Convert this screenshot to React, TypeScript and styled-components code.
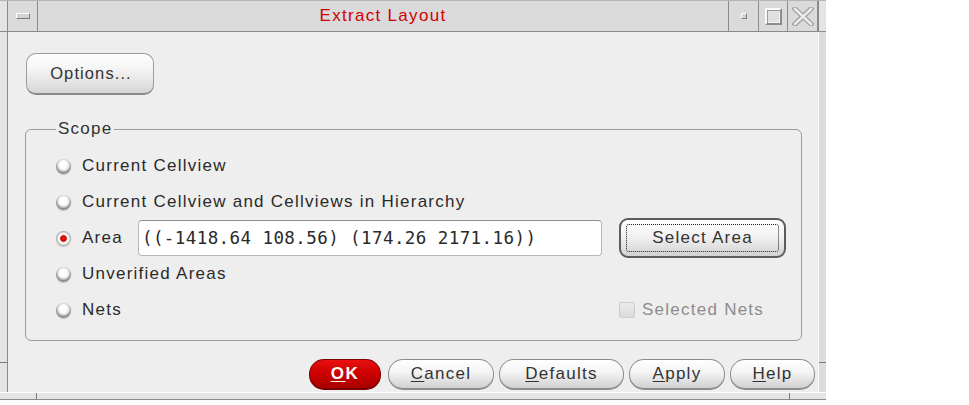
import React from 'react';
import styled, { createGlobalStyle } from 'styled-components';

const Global = createGlobalStyle`
  html, body { margin: 0; padding: 0; background: #ffffff; }
  body { font-family: "Liberation Sans", Arial, sans-serif; }
  * { box-sizing: border-box; }
`;

const Window = styled.div`
  width: 826px;
  height: 400px;
  display: flex;
  flex-direction: column;
  background: #e2e2e2;
`;

const TitleBar = styled.div`
  height: 32px;
  display: flex;
  background: #dadada;
  border-top: 1px solid #b4b4b4;
  border-bottom: 1px solid #8a8a8a;
`;

const FrameEdge = styled.div<{ $side: 'left' | 'right' }>`
  width: 8px;
  background: #e4e4e4;
  ${(p) => (p.$side === 'left' ? 'border-right: 1px solid #8a8a8a;' : 'border-left: 1px solid #8a8a8a;')}
`;

const TitleCell = styled.div<{ $w: number }>`
  width: ${(p) => p.$w}px;
  display: flex;
  align-items: center;
  justify-content: center;
  border-right: 1px solid #8a8a8a;
  &:last-of-type { border-right: none; }
`;

const RaisedBar = styled.span<{ $w: number; $h: number }>`
  display: block;
  width: ${(p) => p.$w}px;
  height: ${(p) => p.$h}px;
  background: #d2d2d2;
  border: 1px solid;
  border-color: #ffffff #7c7c7c #7c7c7c #ffffff;
`;

const MaxBox = styled.span`
  display: block;
  width: 17px;
  height: 17px;
  border: 2px solid;
  border-color: #fafafa #8c8c8c #8c8c8c #fafafa;
  box-shadow: inset 1px 1px 0 #9a9a9a, inset -1px -1px 0 #f4f4f4;
  background: #e0e0e0;
`;

const TitleText = styled.div`
  flex: 1;
  display: flex;
  align-items: center;
  justify-content: center;
  border-right: 1px solid #8a8a8a;
  color: #d20000;
  font-size: 17px;
  letter-spacing: 1.3px;
`;

const Middle = styled.div`
  flex: 1;
  display: flex;
  min-height: 0;
`;

const SideEdge = styled.div<{ $side: 'left' | 'right' }>`
  width: 8px;
  display: flex;
  flex-direction: column;
  background: ${(p) => (p.$side === 'left' ? '#e4e4e4' : '#dcdcdc')};
  ${(p) => (p.$side === 'left' ? 'border-right: 1px solid #8a8a8a;' : 'border-left: 1px solid #fbfbfb;')}
`;

const EdgeFill = styled.div`
  flex: 1;
`;

const EdgeCorner = styled.div`
  height: 30px;
  border-top: 1px solid #7a7a7a;
`;

const BottomEdge = styled.div`
  height: 8px;
  display: flex;
  background: #e4e4e4;
  border-top: 1px solid #fcfcfc;
  border-bottom: 1px solid #8a8a8a;
`;

const BottomCorner = styled.div<{ $side: 'left' | 'right' }>`
  width: 37px;
  ${(p) => (p.$side === 'left' ? 'border-right: 1px solid #7a7a7a;' : 'border-left: 1px solid #7a7a7a;')}
`;

const Content = styled.div`
  flex: 1;
  display: flex;
  flex-direction: column;
  padding: 21px 0 0 17px;
  background: #eeeeee;
  color: #2a2a2a;
  font-size: 17px;
  letter-spacing: 1.25px;
`;

const OptionsButton = styled.button`
  align-self: flex-start;
  margin-left: 1px;
  width: 128px;
  height: 42px;
  border-radius: 10px;
  border: 1px solid #9c9c9c;
  border-bottom: 2px solid #8a8a8a;
  background: linear-gradient(#ffffff, #f4f4f4 40%, #d6d6d6);
  font: inherit;
  letter-spacing: 1.1px;
  font-size: 16.5px;
  color: #333;
  padding: 0 0 0 2px;
`;

const Group = styled.fieldset`
  margin: 24px 16px 0 0;
  padding: 9px 15px 12px 31px;
  border: 1px solid #9c9c9c;
  border-radius: 6px;
  min-width: 0;
  display: flex;
  flex-direction: column;
`;

const Legend = styled.legend`
  padding: 0 2px;
  margin-left: -1px;
  line-height: 20px;
  color: #333;
`;

const Row = styled.div`
  height: 36px;
  display: flex;
  align-items: center;
`;

const Radio = styled.span<{ $on?: boolean }>`
  width: 15px;
  height: 15px;
  margin-left: -1px;
  flex: none;
  border-radius: 50%;
  background: ${(p) =>
    p.$on
      ? 'radial-gradient(circle at 50% 50%, #ff1a1a 0, #c80000 2.8px, #e8c8c8 3.6px, #ffffff 4.4px, #e4e4e4 5.8px, #a0a0a0 7.5px)'
      : 'radial-gradient(circle at 50% 40%, #ffffff 0, #fdfdfd 3.5px, #ececec 5px, #b8b8b8 6.6px, #8e8e8e 7.5px)'};
  box-shadow: 0 1px 1px rgba(0, 0, 0, 0.18);
`;

const Label = styled.span<{ $muted?: boolean }>`
  margin-left: 11px;
  white-space: nowrap;
  color: ${(p) => (p.$muted ? '#8c8c8c' : '#2a2a2a')};
`;

const Field = styled.input`
  margin-left: 15px;
  width: 464px;
  height: 36px;
  flex: none;
  border: 1px solid #b8b8b8;
  border-top-color: #8e8e8e;
  border-radius: 4px;
  background: #ffffff;
  padding: 0 0 0 3px;
  font-family: "DejaVu Sans Mono", "Liberation Mono", monospace;
  font-size: 17.5px;
  letter-spacing: 0.42px;
  color: #2a2a2a;
  outline: none;
`;

const FocusButton = styled.button`
  margin-left: auto;
  width: 167px;
  height: 40px;
  flex: none;
  padding: 4px 5px;
  border-radius: 9px;
  border: 2px solid #5c5c5c;
  background: linear-gradient(#ffffff, #f2f2f2 45%, #d2d2d2);
  font: inherit;
  letter-spacing: 1.25px;
  color: #333;
`;

const FocusRing = styled.span`
  display: flex;
  align-items: center;
  justify-content: center;
  width: 100%;
  height: 100%;
  border: 1px dotted #222;
  border-radius: 3px;
`;

const CheckWrap = styled.label`
  margin-left: auto;
  width: 167px;
  display: flex;
  align-items: center;
`;

const CheckBox = styled.span`
  width: 16px;
  height: 16px;
  flex: none;
  background: linear-gradient(#ececec, #dadada);
  border: 1px solid #cdcdcd;
  border-radius: 2px;
`;

const CheckLabel = styled.span`
  margin-left: 7px;
  color: #8c8c8c;
  white-space: nowrap;
`;

const ButtonRow = styled.div`
  margin-top: 18px;
  display: flex;
  justify-content: flex-end;
  gap: 5px;
  padding-right: 3px;
`;

const PillButton = styled.button<{ $w: number; $primary?: boolean }>`
  width: ${(p) => p.$w}px;
  height: 31px;
  flex: none;
  padding: 0;
  border-radius: 15px;
  border: 1px solid ${(p) => (p.$primary ? '#7a0000' : '#8c8c8c')};
  border-bottom-width: 2px;
  background: ${(p) =>
    p.$primary
      ? 'linear-gradient(#e81010, #cc0000 50%, #a80000)'
      : 'linear-gradient(#ffffff, #f3f3f3 45%, #d0d0d0)'};
  color: ${(p) => (p.$primary ? '#ffffff' : '#333333')};
  font: inherit;
  font-weight: ${(p) => (p.$primary ? 700 : 400)};
  letter-spacing: ${(p) => (p.$primary ? '1.6px' : '1.25px')};
  margin-right: ${(p) => (p.$primary ? '2px' : '0')};
  u { text-decoration-thickness: 1px; text-underline-offset: 2px; }
`;

const CloseIcon = () => (
  <svg width="22" height="19" viewBox="0 0 22 19">
    <path d="M3 2 L19 17 M19 2 L3 17" stroke="#9c9c9c" strokeWidth="5" strokeLinecap="square" fill="none" />
    <path d="M3 2 L19 17 M19 2 L3 17" stroke="#ececec" strokeWidth="2.6" strokeLinecap="square" fill="none" />
  </svg>
);

export default function App() {
  return (
    <>
      <Global />
      <Window>
        <TitleBar>
          <FrameEdge $side="left" />
          <TitleCell $w={30}>
            <RaisedBar $w={14} $h={6} />
          </TitleCell>
          <TitleText>Extract Layout</TitleText>
          <TitleCell $w={30}>
            <RaisedBar $w={6} $h={6} />
          </TitleCell>
          <TitleCell $w={29}>
            <MaxBox />
          </TitleCell>
          <TitleCell $w={30}>
            <CloseIcon />
          </TitleCell>
          <FrameEdge $side="right" />
        </TitleBar>
        <Middle>
          <SideEdge $side="left">
            <EdgeFill />
            <EdgeCorner />
          </SideEdge>
          <Content>
            <OptionsButton>Options...</OptionsButton>
            <Group>
              <Legend>Scope</Legend>
              <Row>
                <Radio />
                <Label>Current Cellview</Label>
              </Row>
              <Row>
                <Radio />
                <Label>Current Cellview and Cellviews in Hierarchy</Label>
              </Row>
              <Row>
                <Radio $on />
                <Label>Area</Label>
                <Field readOnly value="((-1418.64 108.56) (174.26 2171.16))" />
                <FocusButton>
                  <FocusRing>Select Area</FocusRing>
                </FocusButton>
              </Row>
              <Row>
                <Radio />
                <Label>Unverified Areas</Label>
              </Row>
              <Row>
                <Radio />
                <Label>Nets</Label>
                <CheckWrap>
                  <CheckBox />
                  <CheckLabel>Selected Nets</CheckLabel>
                </CheckWrap>
              </Row>
            </Group>
            <ButtonRow>
              <PillButton $w={72} $primary>
                <u>O</u>K
              </PillButton>
              <PillButton $w={106}>
                <u>C</u>ancel
              </PillButton>
              <PillButton $w={125}>
                <u>D</u>efaults
              </PillButton>
              <PillButton $w={96}>
                <u>A</u>pply
              </PillButton>
              <PillButton $w={85}>
                <u>H</u>elp
              </PillButton>
            </ButtonRow>
          </Content>
          <SideEdge $side="right">
            <EdgeFill />
            <EdgeCorner />
          </SideEdge>
        </Middle>
        <BottomEdge>
          <BottomCorner $side="left" />
          <EdgeFill />
          <BottomCorner $side="right" />
        </BottomEdge>
      </Window>
    </>
  );
}
